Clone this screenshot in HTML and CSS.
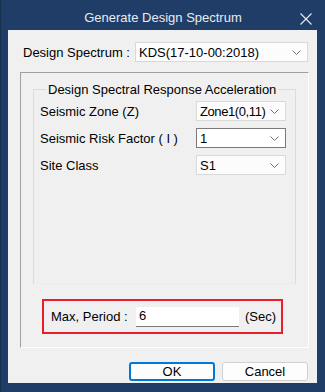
FILE: index.html
```html
<!DOCTYPE html>
<html lang="en">
<head>
  <meta charset="UTF-8">
  <title>Generate Design Spectrum</title>
  <link rel="stylesheet" href="styles.css">
</head>
<body>

  <div class="window">
    <div class="titlebar">
      <span class="title">Generate Design Spectrum</span>
      <svg class="close" width="12" height="12" viewBox="0 0 12 12">
        <path d="M0.5 0.5 L11.5 11.5 M11.5 0.5 L0.5 11.5" stroke="#e8edf3" stroke-width="1.1" fill="none"/>
      </svg>
    </div>

    <div class="client">
      <div class="spectrum-row">
        <span class="label">Design Spectrum :</span>
        <div class="combo combo-wide">
          <span>KDS(17-10-00:2018)</span>
          <svg class="chev" width="9" height="5" viewBox="0 0 9 5"><path d="M0.5 0.5 L4.5 4.5 L8.5 0.5" stroke="#707070" fill="none"/></svg>
        </div>
      </div>

      <div class="panel">
        <fieldset class="group">
          <legend>Design Spectral Response Acceleration</legend>
          <div class="field">
            <span class="label">Seismic Zone (Z)</span>
            <div class="combo">
              <span class="tight">Zone1(0,11)</span>
              <svg class="chev" width="9" height="5" viewBox="0 0 9 5"><path d="M0.5 0.5 L4.5 4.5 L8.5 0.5" stroke="#707070" fill="none"/></svg>
            </div>
          </div>
          <div class="field">
            <span class="label">Seismic Risk Factor ( I )</span>
            <div class="combo combo-focus">
              <span>1</span>
              <svg class="chev" width="9" height="5" viewBox="0 0 9 5"><path d="M0.5 0.5 L4.5 4.5 L8.5 0.5" stroke="#707070" fill="none"/></svg>
            </div>
          </div>
          <div class="field">
            <span class="label">Site Class</span>
            <div class="combo">
              <span>S1</span>
              <svg class="chev" width="9" height="5" viewBox="0 0 9 5"><path d="M0.5 0.5 L4.5 4.5 L8.5 0.5" stroke="#707070" fill="none"/></svg>
            </div>
          </div>
        </fieldset>

        <div class="period-box">
          <span class="label">Max, Period :</span>
          <div class="textbox">6</div>
          <span class="unit">(Sec)</span>
        </div>
      </div>

      <div class="buttons">
        <button class="btn btn-default">OK</button>
        <button class="btn">Cancel</button>
      </div>
    </div>
  </div>

</body>
</html>
```

FILE: styles.css
```css
* {
  box-sizing: border-box;
}

body {
  margin: 0;
  padding: 0;
  font-family: "Liberation Sans", Arial, sans-serif;
  font-size: 13px;
  color: #000;
  background-color: #1f3d67;
}

.window {
  width: 325px;
  height: 392px;
  display: flex;
  flex-direction: column;
  background-color: #1f3d67;
  border-left: 1px solid #17304f;
}

.titlebar {
  height: 30px;
  display: flex;
  align-items: center;
  justify-content: center;
  position: relative;
  color: #e6ebf2;
  font-size: 13px;
}

.titlebar .title {
  margin-top: 5px;
}

.close {
  position: absolute;
  right: 13px;
  top: 13px;
}

.client {
  flex: 1;
  margin: 0 8px 9px 7px;
  background-color: #f0f0f0;
  padding: 12px 9px 2px 12px;
  display: flex;
  flex-direction: column;
}

.spectrum-row {
  display: flex;
  align-items: center;
  height: 20px;
}

.spectrum-row .label {
  margin-left: 3px;
  width: 112px;
}

.combo {
  height: 20px;
  background-color: #fcfcfc;
  border: 1px solid #d9d9d9;
  display: flex;
  align-items: center;
  justify-content: space-between;
  padding: 0 6px 0 3px;
}

.combo .tight {
  letter-spacing: -0.4px;
}

.combo-wide {
  flex: 1;
}

.combo-focus {
  border-color: #7a7a7a;
  background-color: #ffffff;
}

.chev {
  flex: none;
}

.panel {
  margin-top: 10px;
  height: 276px;
  border-top: 1px solid #a0a0a0;
  border-left: 1px solid #a0a0a0;
  border-right: 1px solid #ffffff;
  border-bottom: 1px solid #ffffff;
  margin-right: -1px;
  padding: 9px 12px 0 12px;
  display: flex;
  flex-direction: column;
}

.group {
  margin: 0;
  border: 1px solid #dcdcdc;
  border-bottom-color: #ebebeb;
  padding: 4px 9px 0 6px;
  height: 202px;
  display: flex;
  flex-direction: column;
  gap: 7px;
}

.group legend {
  padding: 0 2px;
  margin-left: 6px;
}

.field {
  display: flex;
  align-items: center;
  justify-content: space-between;
}

.field .combo {
  width: 90px;
}

.period-box {
  margin: 15px 13px 0 9px;
  height: 35px;
  border: 2px solid #e81f2a;
  display: flex;
  align-items: center;
  padding: 0 0 0 7px;
}

.period-box .label {
  width: 85px;
}

.textbox {
  width: 103px;
  height: 20px;
  background-color: #ffffff;
  border-bottom: 1px solid #7a7a7a;
  padding: 1px 0 0 3px;
}

.unit {
  margin-left: 6px;
}

.buttons {
  margin-top: 14px;
  display: flex;
  justify-content: flex-end;
  gap: 7px;
}

.btn {
  width: 86px;
  height: 19px;
  font-family: inherit;
  font-size: 13px;
  background-color: #fdfdfd;
  border: 1px solid #d0d0d0;
  border-radius: 3px;
  padding: 0;
}

.btn-default {
  border: 2px solid #0078d7;
}
```
